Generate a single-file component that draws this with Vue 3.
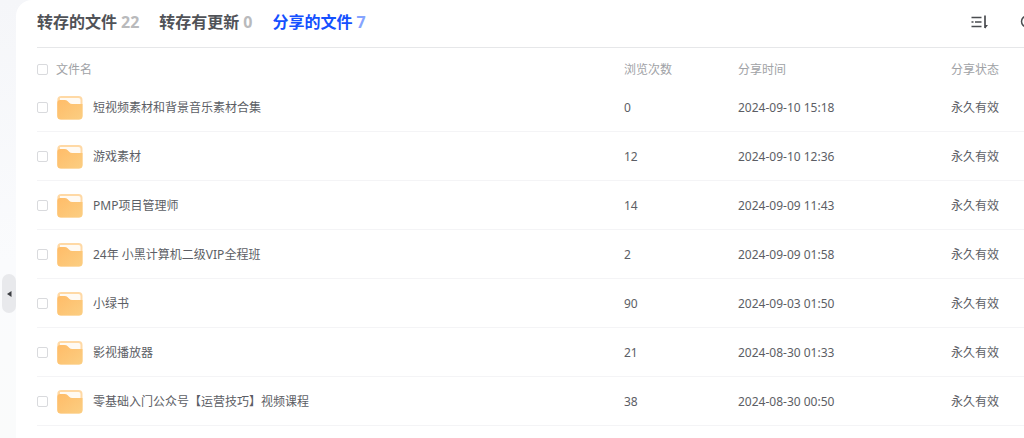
<script setup>
import { ref } from 'vue'

const tabs = [
  { label: '转存的文件', count: 22 },
  { label: '转存有更新', count: 0 },
  { label: '分享的文件', count: 7 },
]
const active = ref(2)

const files = [
  { name: '短视频素材和背景音乐素材合集', views: 0, time: '2024-09-10 15:18' },
  { name: '游戏素材', views: 12, time: '2024-09-10 12:36' },
  { name: 'PMP项目管理师', views: 14, time: '2024-09-09 11:43' },
  { name: '24年 小黑计算机二级VIP全程班', views: 2, time: '2024-09-09 01:58' },
  { name: '小绿书', views: 90, time: '2024-09-03 01:50' },
  { name: '影视播放器', views: 21, time: '2024-08-30 01:33' },
  { name: '零基础入门公众号【运营技巧】视频课程', views: 38, time: '2024-08-30 00:50' },
]
</script>

<template>
  <div class="page">
    <aside class="rail">
      <button class="handle" type="button" aria-label="收起侧栏">
        <svg width="5" height="6" viewBox="0 0 5 6"><path d="M4.500 0v6L0 3z" fill="#3c3e42" /></svg>
      </button>
    </aside>
    <main class="panel">
      <header class="bar">
        <nav class="tabs">
          <button
            v-for="(tab, i) in tabs"
            :key="tab.label"
            type="button"
            class="tab"
            :class="{ active: i === active }"
            @click="active = i"
          >
            <span>{{ tab.label }}</span>
            <span class="count">{{ tab.count }}</span>
          </button>
        </nav>
        <div class="tools">
          <button class="tool" type="button" aria-label="排序">
            <svg width="18" height="16" viewBox="0 0 18 16" fill="none" stroke="#4a4c50" stroke-width="1.5">
              <path d="M0.500 3.500h10M0.500 8h2M4 8h6.500M0.500 12.500h10" />
              <path d="M14 1.500v12.500" stroke-width="1.700" />
              <path d="M14 14.800v-3.800h3z" fill="#4a4c50" stroke="none" />
            </svg>
          </button>
          <button class="tool" type="button" aria-label="搜索">
            <svg width="18" height="16" viewBox="0 0 18 16" fill="none" stroke="#4a4c50" stroke-width="1.5">
              <circle cx="7" cy="7.5" r="5.5" />
              <path d="M11 11.5l4 4" />
            </svg>
          </button>
        </div>
      </header>

      <table class="files">
        <colgroup>
          <col class="c-check" />
          <col />
          <col class="c-views" />
          <col class="c-time" />
          <col class="c-status" />
        </colgroup>
        <thead>
          <tr>
            <th><input type="checkbox" aria-label="全选" /></th>
            <th>文件名</th>
            <th>浏览次数</th>
            <th>分享时间</th>
            <th>分享状态</th>
          </tr>
        </thead>
        <tbody>
          <tr v-for="(file, i) in files" :key="file.name">
            <td><input :id="'file-' + i" type="checkbox" /></td>
            <td>
              <label class="name" :for="'file-' + i">
                <svg class="folder" width="28" height="26" viewBox="0 0 28 26">
                  <defs>
                    <linearGradient :id="'front-' + i" x1="0" y1="0" x2="1" y2="1">
                      <stop offset="0" stop-color="#ffbc68" />
                      <stop offset="1" stop-color="#fbce82" />
                    </linearGradient>
                  </defs>
                  <rect x="1.300" y="1" width="25.200" height="23.500" rx="4" fill="#ffd9a5" />
                  <path d="M4 3h18.500q2 0 2 2v6H4z" fill="#fffaf3" />
                  <path
                    d="M1.300 8q0-3 3-3h4.200q2 0 3.200 1.300l1.500 1.500q1.200 1.200 3 1.200h10.300v12q0 3.500-3.500 3.500h-18.200q-3.500 0-3.500-3.500z"
                    :fill="`url(#front-${i})`"
                  />
                </svg>
                <span>{{ file.name }}</span>
              </label>
            </td>
            <td>{{ file.views }}</td>
            <td>{{ file.time }}</td>
            <td>永久有效</td>
          </tr>
        </tbody>
      </table>
    </main>
  </div>
</template>

<style>
body {
  margin: 0;
}
</style>

<style scoped>
.page {
  display: flex;
  min-height: 100vh;
  overflow: hidden;
  background: linear-gradient(#f5f6f9, #fafbfd 60%, #fafbfb);
  font-family: "Noto Sans", "Noto Sans CJK SC", sans-serif;
  font-size: 12px;
  color: #5c5e65;
}
button {
  margin: 0;
  padding: 0;
  border: 0;
  background: none;
  font: inherit;
  color: inherit;
  cursor: pointer;
}
svg {
  display: block;
}
.rail {
  display: flex;
  flex: 0 0 16px;
  align-items: center;
  justify-content: flex-end;
  padding-top: 149px;
  box-sizing: border-box;
}
.handle {
  display: flex;
  align-items: center;
  justify-content: center;
  width: 14px;
  height: 39px;
  border-radius: 7px;
  background: #e8e9ec;
}
.panel {
  flex: 1;
  min-width: 0;
  padding-left: 21px;
  border-top-left-radius: 16px;
  background: #fff;
}
.bar {
  display: flex;
  align-items: center;
  justify-content: space-between;
  height: 47px;
  border-bottom: 1px solid #e6e7e9;
  overflow: hidden;
}
.tabs {
  display: flex;
  gap: 20px;
  padding-bottom: 4px;
}
.tab {
  display: flex;
  gap: 4px;
  font-size: 16px;
  line-height: 24px;
  font-weight: 700;
  color: #505257;
  white-space: nowrap;
}
.count {
  color: #b9babc;
}
.tab.active {
  color: #1450ff;
}
.tab.active .count {
  color: #86a4ff;
}
.tools {
  display: flex;
  gap: 31px;
  margin-right: -14px;
  padding-bottom: 4px;
}
.files {
  width: 100%;
  table-layout: fixed;
  border-collapse: separate;
  border-spacing: 0;
}
.c-check {
  width: 19px;
}
.c-views {
  width: 114px;
}
.c-time {
  width: 213px;
}
.c-status {
  width: 73px;
}
th,
td {
  padding: 0;
  text-align: left;
  vertical-align: middle;
  line-height: 18px;
  white-space: nowrap;
}
th {
  height: 28px;
  padding-top: 7px;
  font-weight: 400;
  color: #a0a2a6;
}
td {
  height: 48px;
  border-bottom: 1px solid #f4f4f6;
}
th + th {
  height: 26px;
  padding-top: 9px;
}
td + td {
  height: 46px;
  padding-top: 2px;
}
input {
  display: block;
  appearance: none;
  box-sizing: border-box;
  width: 11px;
  height: 11px;
  margin: 0;
  border: 1px solid #d9dadd;
  border-radius: 2px;
  background: #fff;
}
input:checked {
  border-color: #1450ff;
  background: #1450ff;
}
.name {
  display: flex;
  align-items: center;
  gap: 9px;
}
.folder {
  flex: none;
}
</style>
